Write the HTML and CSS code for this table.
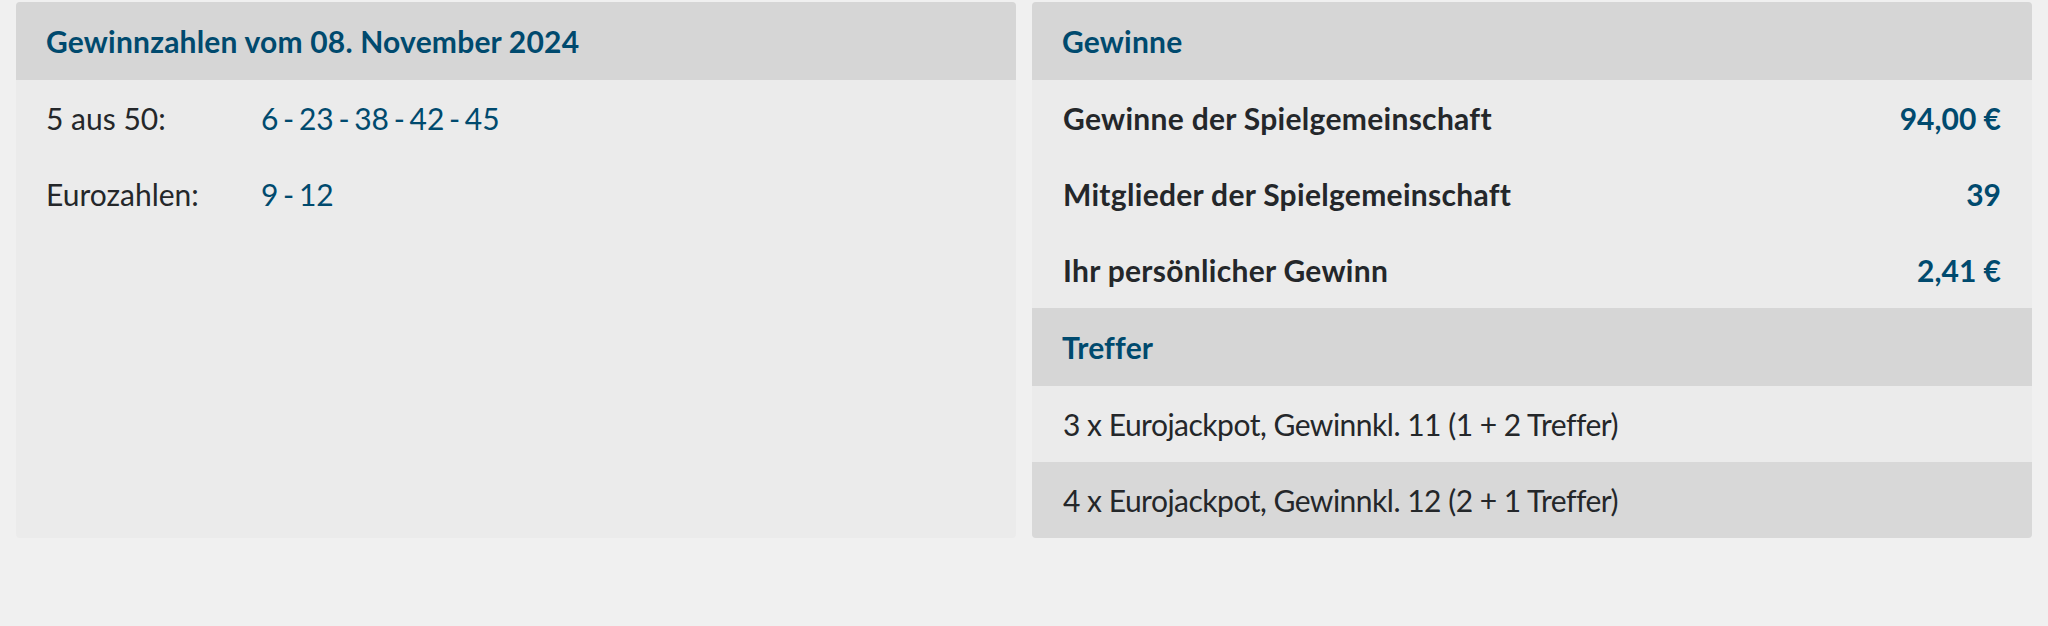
FILE: index.html
```html
<!DOCTYPE html>
<html lang="de">
<head>
<meta charset="utf-8">
<title>Gewinnzahlen</title>
<link rel="stylesheet" href="styles.css">
</head>
<body>
<main class="page">
  <section class="panel">
    <h2 class="panel-head">Gewinnzahlen vom 08. November 2024</h2>
    <div class="draw-row"><span class="draw-label">5 aus 50:</span><span class="draw-value">6 - 23 - 38 - 42 - 45</span></div>
    <div class="draw-row"><span class="draw-label">Eurozahlen:</span><span class="draw-value">9 - 12</span></div>
  </section>
  <section class="panel">
    <h2 class="panel-head">Gewinne</h2>
    <div class="win-row"><span class="win-label">Gewinne der Spielgemeinschaft</span><span class="win-value">94,00 €</span></div>
    <div class="win-row"><span class="win-label">Mitglieder der Spielgemeinschaft</span><span class="win-value">39</span></div>
    <div class="win-row"><span class="win-label">Ihr persönlicher Gewinn</span><span class="win-value">2,41 €</span></div>
    <h2 class="panel-head">Treffer</h2>
    <div class="hit-row">3 x Eurojackpot, Gewinnkl. 11 (1 + 2 Treffer)</div>
    <div class="hit-row hit-row-alt">4 x Eurojackpot, Gewinnkl. 12 (2 + 1 Treffer)</div>
  </section>
</main>
</body>
</html>
```

FILE: styles.css
```css
html, body {
  margin: 0;
  padding: 0;
}
body {
  background: #f0f0f0;
  font-family: "Lato", "Noto Sans", sans-serif;
  color: #24272a;
  width: 2048px;
  height: 626px;
}
.page {
  display: grid;
  grid-template-columns: 1000px 1000px;
  column-gap: 16px;
  padding: 2px 16px 0;
  align-items: stretch;
}
.panel {
  background: #ebebeb;
  border-radius: 4px;
  overflow: hidden;
  display: flex;
  flex-direction: column;
}
.panel-head {
  margin: 0;
  height: 78px;
  display: flex;
  align-items: center;
  padding: 0 31px 0 30px;
  background: #d6d6d6;
  color: #004a6e;
  font-size: 30px;
  font-weight: 700;
  letter-spacing: 0.2px;
}
.draw-row {
  height: 76px;
  display: flex;
  align-items: center;
  padding: 0 30px;
  font-size: 30px;
}
.draw-label {
  width: 215px;
}
.draw-value {
  color: #004a6e;
  word-spacing: -3px;
}
.win-row {
  height: 76px;
  display: flex;
  align-items: center;
  justify-content: space-between;
  padding: 0 31px 0 31px;
  font-size: 30px;
  font-weight: 700;
}
.win-label {
  letter-spacing: 0.3px;
}
.win-value {
  color: #004a6e;
}
.hit-row {
  height: 76px;
  display: flex;
  align-items: center;
  padding: 0 31px;
  font-size: 30px;
  letter-spacing: -0.5px;
}
.hit-row-alt {
  background: #d8d8d8;
}
```
